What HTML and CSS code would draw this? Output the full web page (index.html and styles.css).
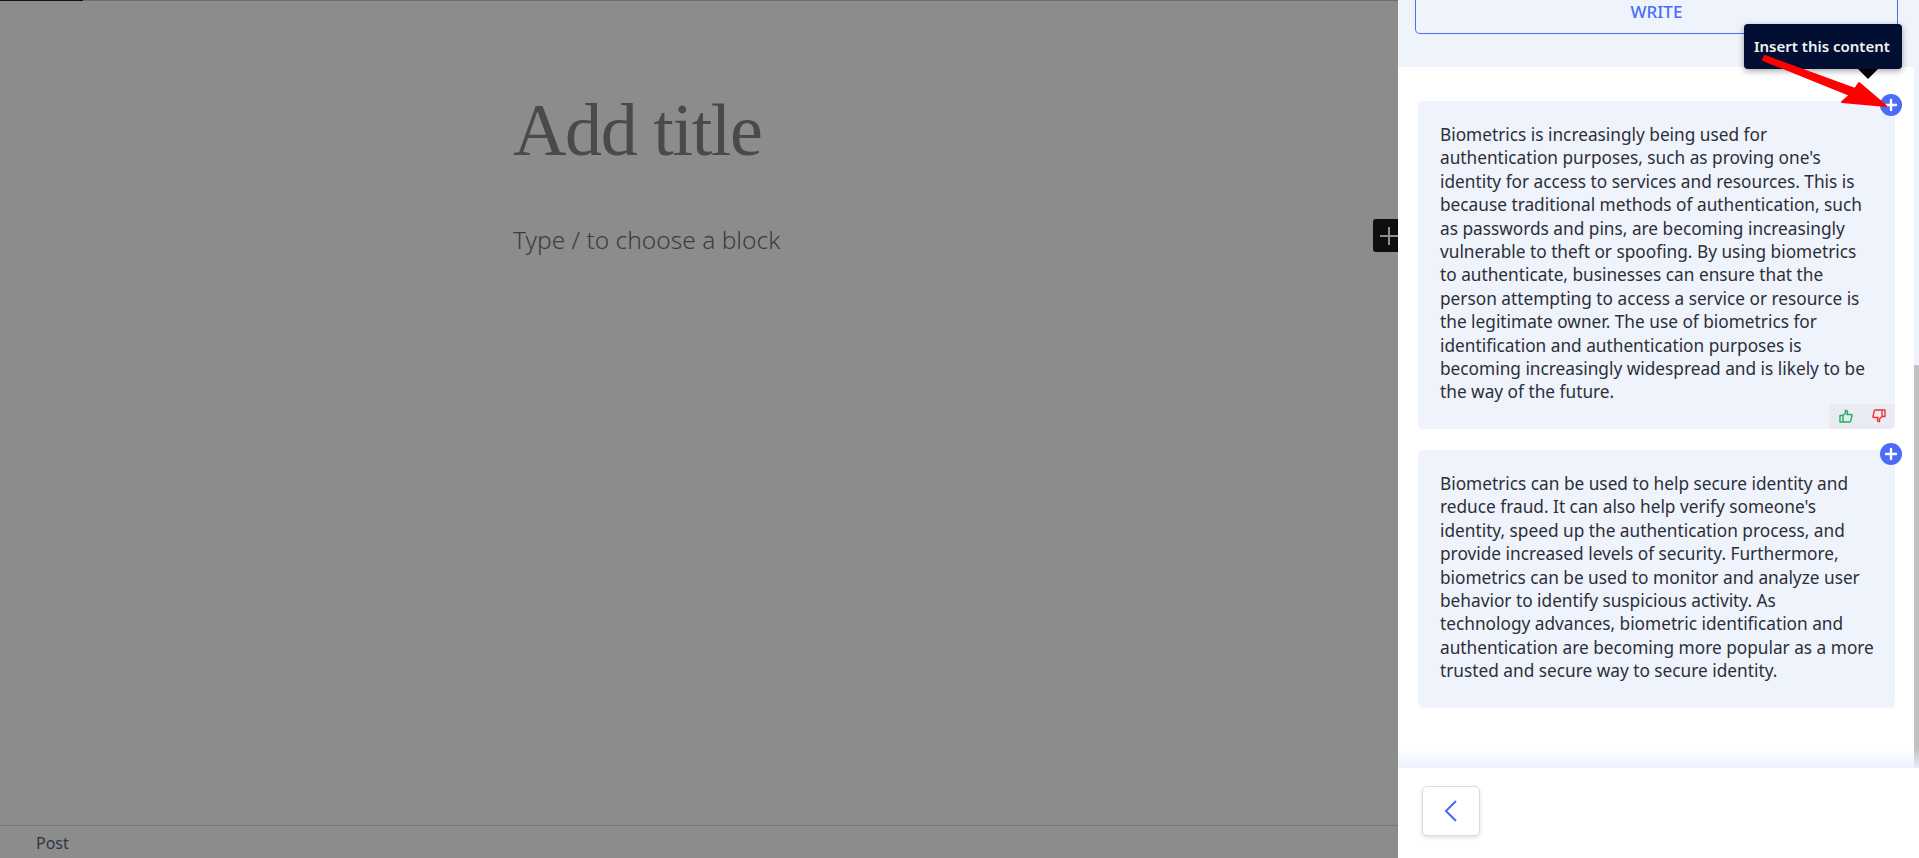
FILE: index.html
```html
<!DOCTYPE html>
<html>
<head>
    <title>Add title</title>
    <meta name="viewport" content="width=device-width, initial-scale=1">
    <link rel="stylesheet" href="styles.css">
</head>
<body>
    <div class="editor">
        <div class="top-strip"></div>
        <main class="canvas">
            <h1>Add title</h1>
            <p class="block-hint">Type / to choose a block</p>
            <span class="add-block">
                <svg width="18" height="18" viewBox="0 0 18 18"><path d="M9 0v18M0 9h18" stroke="#8c8c8c" stroke-width="2" fill="none"/></svg>
            </span>
        </main>
        <div class="status-bar">Post</div>
    </div>

    <aside class="panel">
        <div class="panel-head">
            <button class="write-btn">WRITE</button>
        </div>
        <div class="results">
            <div class="result">
                <span class="plus">
                    <svg width="22" height="22" viewBox="0 0 22 22"><path d="M11 6v10M6 11h10" stroke="#fff" stroke-width="2.4" stroke-linecap="round"/></svg>
                </span>
                <p>Biometrics is increasingly being used for authentication purposes, such as proving one's identity for access to services and resources. This is because traditional methods of authentication, such as passwords and pins, are becoming increasingly vulnerable to theft or spoofing. By using biometrics to authenticate, businesses can ensure that the person attempting to access a service or resource is the legitimate owner. The use of biometrics for identification and authentication purposes is becoming increasingly widespread and is likely to be the way of the future.</p>
                <div class="votes">
                    <svg width="14" height="14" viewBox="0 0 14 14"><path d="M1 6.500h3v6.500H1zM4 6.500 6.500 4V1.500C7.800 1.200 8.700 2 8.500 3.500L8 5.500h4.200c.7 0 1 .6.8 1.200l-1.300 5.400c-.2.6-.5.9-1.100.9H4" fill="none" stroke="#22ad5c" stroke-width="1.400" stroke-linejoin="round"/></svg>
                    <svg width="14" height="14" viewBox="0 0 14 14"><path d="M13 7.500h-3V1h3zM10 7.500 7.500 10v2.500C6.200 12.800 5.300 12 5.500 10.500L6 8.500H1.800c-.7 0-1-.6-.8-1.200l1.300-5.400C2.500 1.300 2.800 1 3.400 1H10" fill="none" stroke="#f23030" stroke-width="1.400" stroke-linejoin="round"/></svg>
                </div>
            </div>
            <div class="result">
                <span class="plus">
                    <svg width="22" height="22" viewBox="0 0 22 22"><path d="M11 6v10M6 11h10" stroke="#fff" stroke-width="2.4" stroke-linecap="round"/></svg>
                </span>
                <p>Biometrics can be used to help secure identity and reduce fraud. It can also help verify someone's identity, speed up the authentication process, and provide increased levels of security. Furthermore, biometrics can be used to monitor and analyze user behavior to identify suspicious activity. As<br>technology advances, biometric identification and authentication are becoming more popular as a more trusted and secure way to secure identity.</p>
            </div>
        </div>
        <div class="panel-foot">
            <button class="back-btn">
                <svg width="12" height="22" viewBox="0 0 12 22"><path d="M11 1 1 11l10 10" fill="none" stroke="#4a6cf7" stroke-width="2"/></svg>
            </button>
        </div>

        <div class="tooltip">Insert this content</div>
        <svg class="pointer" width="140" height="70" viewBox="0 0 140 70"><path d="M7 6 L97 39 L101 33 L128 56 L84 52 L92 45 L5 10 Z" fill="#ff0000" stroke="#ff0000" stroke-width="2" stroke-linejoin="round"/></svg>
    </aside>
</body>
</html>
```

FILE: styles.css
```css
html, body { height: 100%; }
body { display: flex; margin: 0; overflow: hidden; font-family: "Noto Sans", sans-serif; background: #8c8c8c; }

.editor { flex: 1; display: flex; flex-direction: column; min-width: 0; background: #8c8c8c; color: #3a3a3a; }
.top-strip { height: 1px; background: #6e6e6e; }
.top-strip::before { content: ""; display: block; width: 83px; height: 1px; background: #111; }
.canvas { flex: 1; position: relative; padding: 0 0 0 513px; }
h1 { font-family: "Liberation Serif", serif; font-size: 74px; font-weight: 400; letter-spacing: -1.4px; line-height: 86px; margin: 86px 0 0; color: #4a4a4a; }
.block-hint { font-size: 24.500px; font-weight: 300; line-height: 34px; margin: 50px 0 0; color: #3c3c3c; }
.add-block { position: absolute; right: 0; top: 218px; width: 25px; height: 33px; background: #0e0e0e; border-radius: 3px 0 0 3px; display: flex; align-items: center; padding-left: 7px; box-sizing: border-box; }
.status-bar { height: 32px; border-top: 1px solid #757575; padding-left: 36px; font-size: 16px; line-height: 35px; color: #2f3542; }

.panel { position: relative; flex: 0 0 521px; display: flex; flex-direction: column; background: #fff; color: #2b2f3a; }
.panel-head { height: 67px; box-sizing: border-box; background: #eff3fb; padding: 0 21px 0 17px; }
.write-btn { display: block; width: 100%; height: 34px; padding: 0 0 20px; border: 1px solid #4a6cf7; border-top: 0; border-radius: 0 0 5px 5px; background: none; color: #4a6cf7; font: 500 17px "Noto Sans", sans-serif; }

.results { position: relative; flex: 1; padding: 34px 19px 0 20px; border-right: 5px solid #eff3fb; background: #fff; }
.results::before { content: ""; position: absolute; top: 298px; right: -5px; bottom: 0; width: 5px; background: #c1c1c1; }
.results::after { content: ""; position: absolute; left: 0; right: -5px; bottom: 0; height: 20px; background: linear-gradient(rgba(234,240,252,0), rgba(234,240,252,.9)); }
.result { position: relative; background: #eff3fb; border-radius: 5px; margin-bottom: 21px; }
.result p { margin: 0; padding: 22px 18px 25px 22px; font-size: 17.250px; line-height: 23.400px; }
.plus { position: absolute; top: -7px; right: -7px; width: 22px; height: 22px; border-radius: 50%; background: #4a6cf7; }
.votes { position: absolute; right: 0; bottom: 0; width: 66px; height: 25px; border-radius: 0 0 5px 0; background: #e8ebf2; display: flex; align-items: center; justify-content: space-around; }

.panel-foot { height: 90px; padding: 18px 0 0 24px; box-sizing: border-box; background: #fff; }
.back-btn { display: flex; align-items: center; width: 58px; height: 50px; border: 1px solid #dcdcdc; border-radius: 5px; background: #fff; box-shadow: 0 2px 4px rgba(0,0,0,.12); padding: 0 0 0 22px; }

.tooltip { position: absolute; top: 24px; right: 17px; box-sizing: border-box; width: 158px; background: #020f33; color: #f2f2f2; font-size: 15px; font-weight: 600; line-height: 45px; padding: 0 0 0 10px; border-radius: 4px; box-shadow: 0 2px 6px rgba(0,0,0,.35); white-space: nowrap; }
.tooltip::after { content: ""; position: absolute; right: 24px; bottom: -10px; border: 10px solid transparent; border-top-color: #000; border-bottom: 0; }
.pointer { position: absolute; top: 50px; left: 360px; }
```
